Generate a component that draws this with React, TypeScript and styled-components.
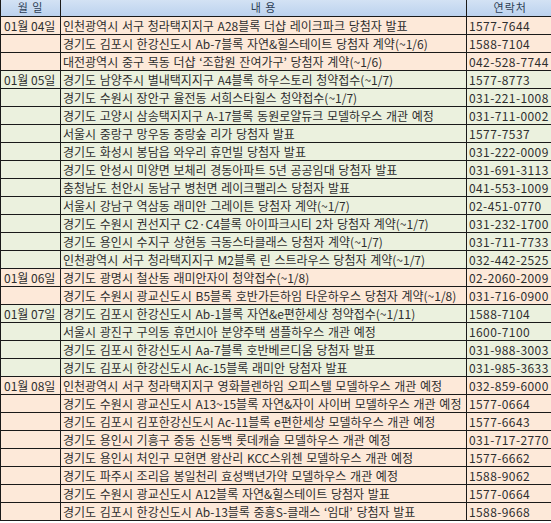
import React from 'react';
import styled, { createGlobalStyle } from 'styled-components';

const GlobalStyle = createGlobalStyle`
  html, body {
    margin: 0;
    padding: 0;
    background: #ffffff;
    overflow: hidden;
  }
  body {
    font-family: "Noto Sans CJK KR", "Noto Sans", sans-serif;
  }
`;

type Row = { text: string; tel: string };
type Group = { date: string; tone: 'peach' | 'green'; rows: Row[] };

const schedule: Group[] = [
  {
    date: '01월 04일',
    tone: 'peach',
    rows: [
      { text: '인천광역시 서구 청라택지지구 A28블록 더샵 레이크파크 당첨자 발표', tel: '1577-7644' },
      { text: '경기도 김포시 한강신도시 Ab-7블록 자연&힐스테이트 당첨자 계약(~1/6)', tel: '1588-7104' },
      { text: '대전광역시 중구 목동 더샵 ‘조합원 잔여가구’ 당첨자 계약(~1/6)', tel: '042-528-7744' },
    ],
  },
  {
    date: '01월 05일',
    tone: 'green',
    rows: [
      { text: '경기도 남양주시 별내택지지구 A4블록 하우스토리 청약접수(~1/7)', tel: '1577-8773' },
      { text: '경기도 수원시 장안구 율전동 서희스타힐스 청약접수(~1/7)', tel: '031-221-1008' },
      { text: '경기도 고양시 삼송택지지구 A-17블록 동원로얄듀크 모델하우스 개관 예정', tel: '031-711-0002' },
      { text: '서울시 중랑구 망우동 중랑숲 리가 당첨자 발표', tel: '1577-7537' },
      { text: '경기도 화성시 봉담읍 와우리 휴먼빌 당첨자 발표', tel: '031-222-0009' },
      { text: '경기도 안성시 미양면 보체리 경동아파트 5년 공공임대 당첨자 발표', tel: '031-691-3113' },
      { text: '충청남도 천안시 동남구 병천면 레이크팰리스 당첨자 발표', tel: '041-553-1009' },
      { text: '서울시 강남구 역삼동 래미안 그레이튼 당첨자 계약(~1/7)', tel: '02-451-0770' },
      { text: '경기도 수원시 권선지구 C2·C4블록 아이파크시티 2차 당첨자 계약(~1/7)', tel: '031-232-1700' },
      { text: '경기도 용인시 수지구 상현동 극동스타클래스 당첨자 계약(~1/7)', tel: '031-711-7733' },
      { text: '인천광역시 서구 청라택지지구 M2블록 린 스트라우스 당첨자 계약(~1/7)', tel: '032-442-2525' },
    ],
  },
  {
    date: '01월 06일',
    tone: 'peach',
    rows: [
      { text: '경기도 광명시 철산동 래미안자이 청약접수(~1/8)', tel: '02-2060-2009' },
      { text: '경기도 수원시 광교신도시 B5블록 호반가든하임 타운하우스 당첨자 계약(~1/8)', tel: '031-716-0900' },
    ],
  },
  {
    date: '01월 07일',
    tone: 'green',
    rows: [
      { text: '경기도 김포시 한강신도시 Ab-1블록 자연&e편한세상 청약접수(~1/11)', tel: '1588-7104' },
      { text: '서울시 광진구 구의동 휴먼시아 분양주택 샘플하우스 개관 예정', tel: '1600-7100' },
      { text: '경기도 김포시 한강신도시 Aa-7블록 호반베르디움 당첨자 발표', tel: '031-988-3003' },
      { text: '경기도 김포시 한강신도시 Ac-15블록 래미안 당첨자 발표', tel: '031-985-3633' },
    ],
  },
  {
    date: '01월 08일',
    tone: 'peach',
    rows: [
      { text: '인천광역시 서구 청라택지지구 영화블렌하임 오피스텔 모델하우스 개관 예정', tel: '032-859-6000' },
      { text: '경기도 수원시 광교신도시 A13~15블록 자연&자이 사이버 모델하우스 개관 예정', tel: '1577-0664' },
      { text: '경기도 김포시 김포한강신도시 Ac-11블록 e편한세상 모델하우스 개관 예정', tel: '1577-6643' },
      { text: '경기도 용인시 기흥구 중동 신동백 롯데캐슬 모델하우스 개관 예정', tel: '031-717-2770' },
      { text: '경기도 용인시 처인구 모현면 왕산리 KCC스위첸 모델하우스 개관 예정', tel: '1577-6662' },
      { text: '경기도 파주시 조리읍 봉일천리 효성백년가약 모델하우스 개관 예정', tel: '1588-9062' },
      { text: '경기도 수원시 광교신도시 A12블록 자연&힐스테이트 당첨자 발표', tel: '1577-0664' },
      { text: '경기도 김포시 한강신도시 Ab-13블록 중흥S-클래스 ‘임대’ 당첨자 발표', tel: '1588-9668' },
    ],
  },
];

const toneColor = {
  peach: '#fde9d9',
  green: '#ebf1de',
};

const Sheet = styled.table`
  width: 553px;
  border-collapse: collapse;
  table-layout: fixed;
  font-size: 12px;
  color: #2e2e2e;
`;

const HeadRow = styled.tr`
  height: 16px;
  background: linear-gradient(to bottom, #d3e2f4, #bcd2ee);
`;

const HeadCell = styled.th`
  padding: 0;
  font-weight: normal;
  font-size: 11px;
  color: #2d3e55;
  text-align: center;
  border-left: 1px solid #1a1a1a;
  border-bottom: 1px solid #1a1a1a;
  line-height: 15px;
  letter-spacing: 1px;
`;

const BodyRow = styled.tr<{ $tone: 'peach' | 'green' }>`
  height: 18px;
  background: ${(p) => toneColor[p.$tone]};
`;

const Cell = styled.td`
  padding: 0 0 0 2px;
  height: 17px;
  line-height: 17px;
  border: 1px solid #1a1a1a;
  white-space: nowrap;
  overflow: hidden;
  letter-spacing: 0;
  word-spacing: 1px;
`;

const DateCell = styled(Cell)`
  padding: 0 0 0 3px;
  word-spacing: 0;
`;

const TelCell = styled(Cell)`
  padding-left: 2px;
  letter-spacing: 0.4px;
`;

const App: React.FC = () => {
  return (
    <>
      <GlobalStyle />
      <Sheet>
        <colgroup>
          <col style={{ width: 60 }} />
          <col style={{ width: 406 }} />
          <col style={{ width: 87 }} />
        </colgroup>
        <thead>
          <HeadRow>
            <HeadCell>월 일</HeadCell>
            <HeadCell>내 용</HeadCell>
            <HeadCell>연락처</HeadCell>
          </HeadRow>
        </thead>
        <tbody>
          {schedule.map((group) =>
            group.rows.map((row, i) => (
              <BodyRow key={group.date + i} $tone={group.tone}>
                <DateCell>{i === 0 ? group.date : ''}</DateCell>
                <Cell>{row.text}</Cell>
                <TelCell>{row.tel}</TelCell>
              </BodyRow>
            ))
          )}
        </tbody>
      </Sheet>
    </>
  );
};

export default App;
